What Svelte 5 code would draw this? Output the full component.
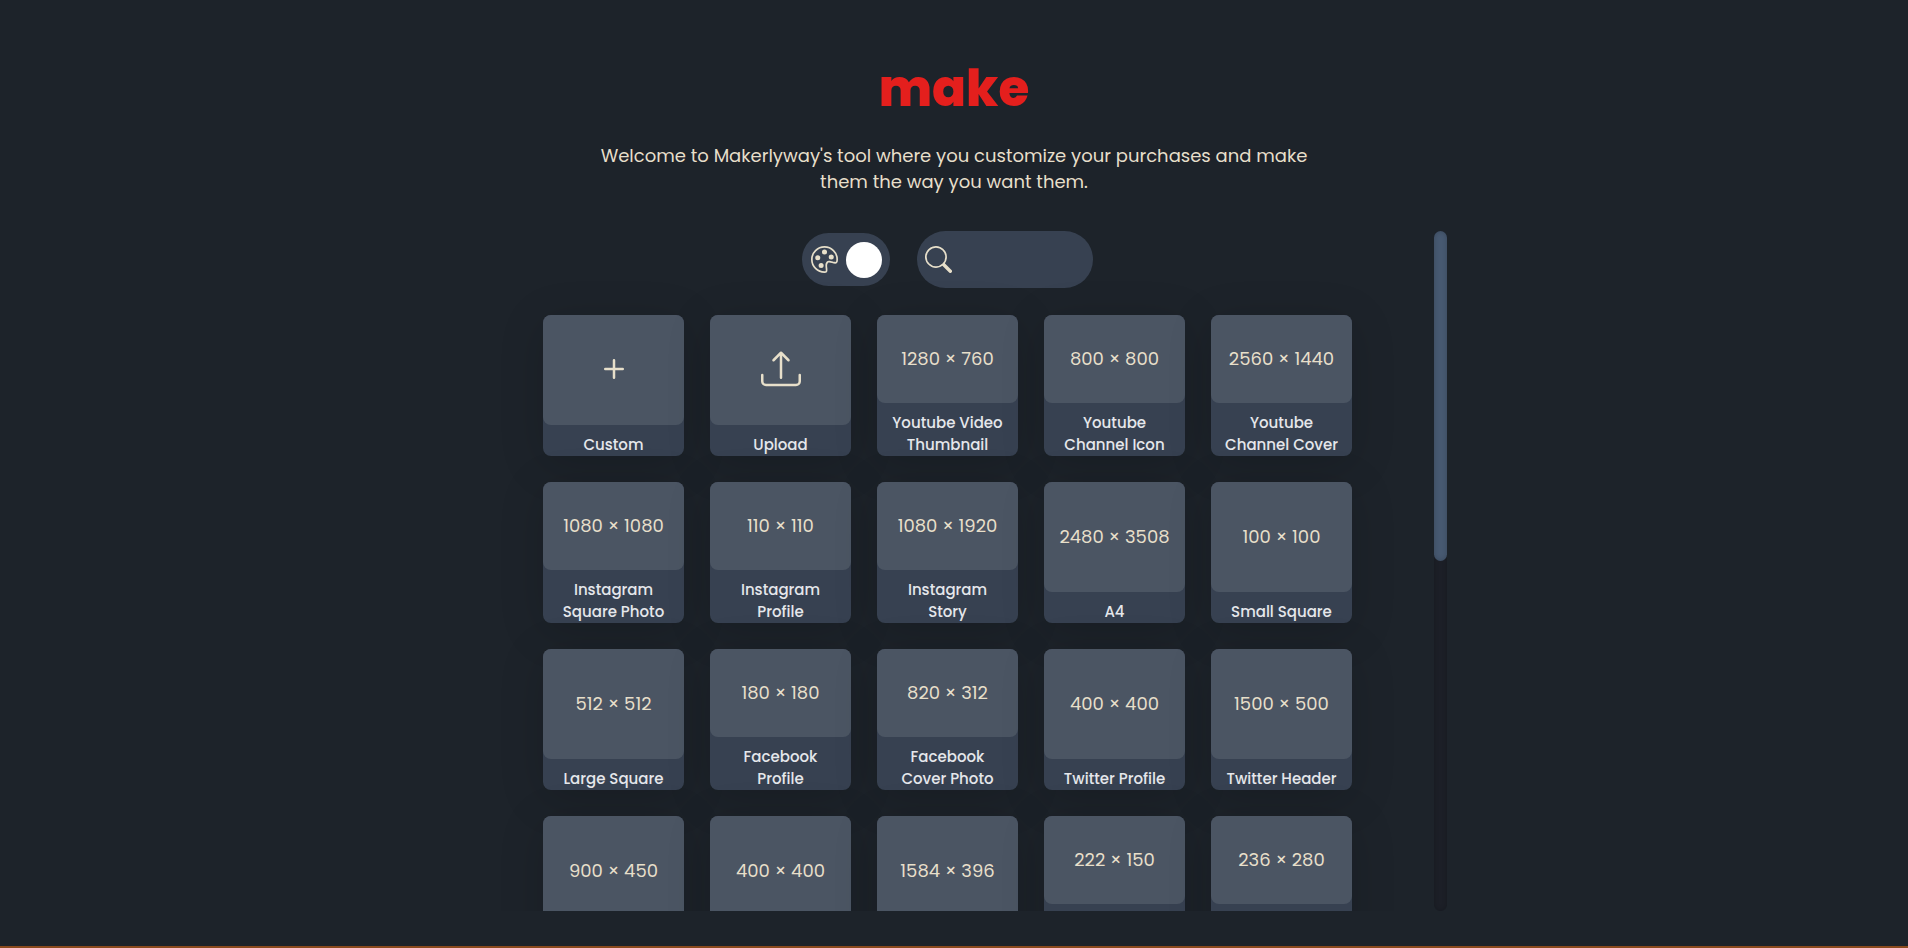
<script>
  const presets = [
    { icon: 'plus', label: ['Custom'] },
    { icon: 'upload', label: ['Upload'] },
    { size: '1280 × 760', label: ['Youtube Video', 'Thumbnail'] },
    { size: '800 × 800', label: ['Youtube', 'Channel Icon'] },
    { size: '2560 × 1440', label: ['Youtube', 'Channel Cover'] },
    { size: '1080 × 1080', label: ['Instagram', 'Square Photo'] },
    { size: '110 × 110', label: ['Instagram', 'Profile'] },
    { size: '1080 × 1920', label: ['Instagram', 'Story'] },
    { size: '2480 × 3508', label: ['A4'] },
    { size: '100 × 100', label: ['Small Square'] },
    { size: '512 × 512', label: ['Large Square'] },
    { size: '180 × 180', label: ['Facebook', 'Profile'] },
    { size: '820 × 312', label: ['Facebook', 'Cover Photo'] },
    { size: '400 × 400', label: ['Twitter Profile'] },
    { size: '1500 × 500', label: ['Twitter Header'] },
    { size: '900 × 450', label: [''] },
    { size: '400 × 400', label: [''] },
    { size: '1584 × 396', label: [''] },
    { size: '222 × 150', label: ['', ''] },
    { size: '236 × 280', label: ['', ''] }
  ];
  let themed = $state(true);
  let query = $state('');
</script>

<main>
  <h1>make</h1>
  <p class="intro">Welcome to Makerlyway's tool where you customize your purchases and make them the way you want them.</p>

  <section class="picker">
    <div class="content">
      <div class="controls">
        <label class="toggle" aria-label="Theme">
          <svg width="27" height="27" viewBox="0 0 16 16" fill="currentColor" aria-hidden="true">
            <path d="M8 5a1.5 1.5 0 1 0 0-3 1.5 1.5 0 0 0 0 3zm4 3a1.5 1.5 0 1 0 0-3 1.5 1.5 0 0 0 0 3zM5.500 7a1.500 1.500 0 1 1-3 0 1.500 1.500 0 0 1 3 0zm.5 6a1.500 1.500 0 1 0 0-3 1.500 1.500 0 0 0 0 3z" />
            <path d="M16 8c0 3.150-1.866 2.585-3.567 2.070C11.420 9.763 10.465 9.473 10 10c-.603.683-.475 1.819-.351 2.920C9.826 14.495 9.996 16 8 16a8 8 0 1 1 8-8zm-8 7c.611 0 .654-.171.655-.176.078-.146.124-.464.070-1.119-.014-.168-.037-.370-.061-.591-.052-.464-.112-1.005-.118-1.462-.010-.707.083-1.610.704-2.314.369-.417.845-.578 1.272-.618.404-.038.812.026 1.160.104.343.077.702.186 1.025.284l.028.008c.346.105.658.199.953.266.653.148.904.083.991.024C14.717 9.380 15 9.161 15 8a7 7 0 1 0-7 7z" />
          </svg>
          <input type="checkbox" bind:checked={themed} />
          <span class="knob"></span>
        </label>
        <label class="search" aria-label="Search">
          <svg width="27" height="27" viewBox="0 0 16 16" fill="currentColor" aria-hidden="true">
            <path d="M11.742 10.344a6.500 6.500 0 1 0-1.397 1.398h-.001c.030.040.062.078.098.115l3.850 3.850a1 1 0 0 0 1.415-1.414l-3.850-3.850a1.007 1.007 0 0 0-.115-.100zM12 6.500a5.500 5.500 0 1 1-11 0 5.500 5.500 0 0 1 11 0z" />
          </svg>
          <input type="text" bind:value={query} />
        </label>
      </div>

      <div class="grid">
        {#each presets as preset}
          <button class="card" type="button">
            <span class="face">
              {#if preset.icon === 'plus'}
                <svg width="40" height="40" viewBox="0 0 16 16" fill="currentColor" aria-hidden="true">
                  <path d="M8 4a.5.5 0 0 1 .5.5v3h3a.5.5 0 0 1 0 1h-3v3a.5.5 0 0 1-1 0v-3h-3a.5.5 0 0 1 0-1h3v-3A.5.5 0 0 1 8 4z" />
                </svg>
              {:else if preset.icon === 'upload'}
                <svg width="40" height="40" viewBox="0 0 16 16" fill="currentColor" aria-hidden="true">
                  <path d="M.5 9.900a.5.5 0 0 1 .5.5v2.500a1 1 0 0 0 1 1h12a1 1 0 0 0 1-1v-2.500a.5.5 0 0 1 1 0v2.500a2 2 0 0 1-2 2H2a2 2 0 0 1-2-2v-2.500a.5.5 0 0 1 .5-.5z" />
                  <path d="M7.646 1.146a.5.5 0 0 1 .708 0l3 3a.5.5 0 0 1-.708.708L8.500 2.707V11.500a.5.5 0 0 1-1 0V2.707L5.354 4.854a.5.5 0 1 1-.708-.708l3-3z" />
                </svg>
              {:else}
                {preset.size}
              {/if}
            </span>
            <span class="label">
              {#each preset.label as line}<span class="line">{line}</span>{/each}
            </span>
          </button>
        {/each}
      </div>
    </div>
    <div class="track"><div class="thumb"></div></div>
  </section>
</main>

<style>
  :global(body) {
    margin: 0;
    background: #1d232a;
  }

  main {
    box-sizing: border-box;
    height: 100vh;
    padding: 57px 24px 35px;
    display: flex;
    flex-direction: column;
    align-items: center;
    border-bottom: 2px solid #8a4a1e;
    font-family: Poppins, Inter, sans-serif;
    color: #e7dfca;
  }

  h1 {
    margin: 0;
    font-size: 50px;
    line-height: 64px;
    font-weight: 800;
    color: #e41f1d;
  }

  .intro {
    margin: 22px 0 36px;
    max-width: 720px;
    font-size: 18px;
    line-height: 26px;
    text-align: center;
  }

  .picker {
    flex: 1;
    min-height: 0;
    width: 100%;
    max-width: 986px;
    display: flex;
  }

  .content {
    flex: 1;
    overflow: hidden;
  }

  .controls {
    display: flex;
    justify-content: center;
    align-items: center;
    gap: 27px;
    margin-bottom: 27px;
  }

  .toggle,
  .search {
    box-sizing: border-box;
    display: flex;
    align-items: center;
    background: #374151;
    border-radius: 29px;
  }

  .toggle {
    height: 53px;
    padding: 0 8px 0 9px;
    gap: 8px;
    cursor: pointer;
  }

  .toggle input {
    position: absolute;
    opacity: 0;
  }

  .knob {
    width: 36px;
    height: 36px;
    border-radius: 50%;
    background: #fff;
  }

  .search {
    width: 176px;
    height: 57px;
    padding: 0 16px 0 8px;
    gap: 8px;
  }

  .search svg {
    flex: none;
  }

  .search input {
    flex: 1;
    min-width: 0;
    border: 0;
    padding: 0;
    outline: 0;
    background: transparent;
    font: inherit;
    color: inherit;
  }

  .grid {
    display: grid;
    grid-template-columns: repeat(5, 141px);
    grid-auto-rows: 141px;
    gap: 26px;
    justify-content: center;
  }

  .card {
    display: flex;
    flex-direction: column;
    padding: 0;
    border: 0;
    border-radius: 8px;
    background: #374151;
    box-shadow: 0 8px 45px rgba(0, 0, 0, 0.15);
    font: inherit;
    color: inherit;
    cursor: pointer;
  }

  .face {
    box-sizing: border-box;
    flex: 1;
    align-self: stretch;
    display: flex;
    align-items: center;
    justify-content: center;
    padding-bottom: 2px;
    border-radius: 8px;
    background: #4b5563;
    font-size: 18px;
  }

  .label {
    align-self: stretch;
    padding-top: 9px;
    font-size: 15px;
    line-height: 22px;
    font-weight: 500;
    color: #e5e7eb;
  }

  .line {
    display: block;
    height: 22px;
  }

  .track {
    width: 13px;
    border-radius: 7px;
    background: #1c1f27;
    box-shadow: inset 0 0 5px rgba(0, 0, 0, 0.2);
  }

  .thumb {
    height: 330px;
    border-radius: 7px;
    background: #475971;
    box-shadow: inset 0 0 5px rgba(0, 0, 0, 0.2);
  }
</style>
